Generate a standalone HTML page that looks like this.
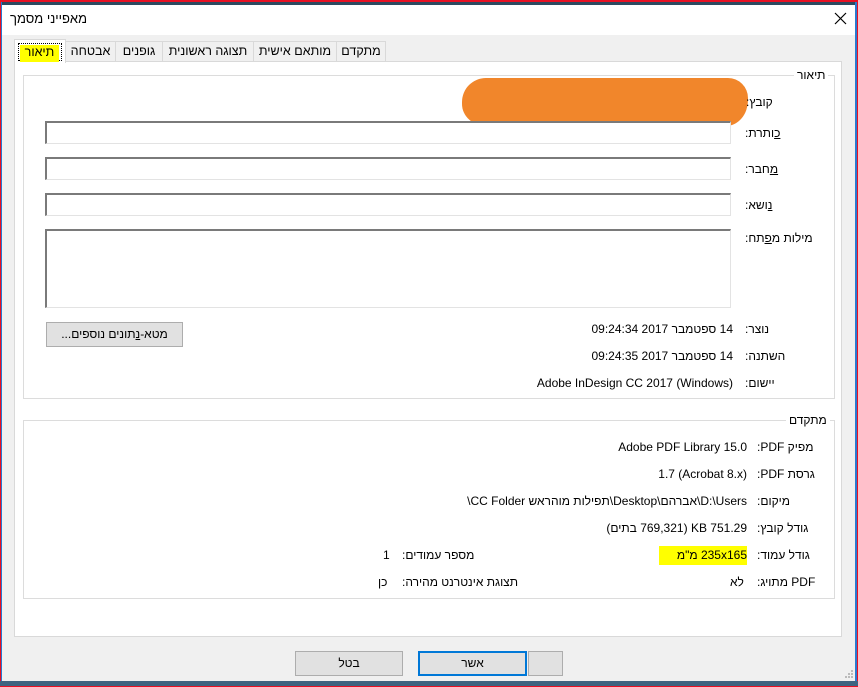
<!DOCTYPE html>
<html><head><meta charset="utf-8">
<style>
*{margin:0;padding:0;box-sizing:border-box}
body{width:858px;height:687px;position:relative;overflow:hidden;background:#f0f0f0;font-family:"Liberation Sans","DejaVu Sans",sans-serif;font-size:12px;color:#000}
.a{position:absolute}
.r{direction:rtl;white-space:nowrap}
.field{position:absolute;left:45px;width:686px;background:#fff;border:1px solid #e3e3e3;border-top:2px solid #7a7a7a;border-left:2px solid #7a7a7a}
.tab{position:absolute;top:41px;height:21px;background:#f0f0f0;border:1px solid #d9d9d9;border-bottom:none;text-align:center;line-height:19px;font-size:12.5px;direction:rtl}
.lbl{position:absolute;direction:rtl;white-space:nowrap}
.btn{position:absolute;background:#e1e1e1;border:1px solid #adadad;text-align:center;direction:rtl}
u{text-decoration:underline}
</style></head><body>
<!-- frame -->
<div class="a" style="left:0;top:0;width:858px;height:2px;background:#e81123"></div>
<div class="a" style="left:0;top:2px;width:858px;height:3px;background:#2d4a60"></div>
<div class="a" style="left:0;top:0;width:1px;height:687px;background:#e81123"></div>
<div class="a" style="left:1px;top:2px;width:1px;height:685px;background:#2b79d0"></div>
<div class="a" style="left:857px;top:0;width:1px;height:687px;background:#e81123"></div>
<div class="a" style="left:855px;top:2px;width:2px;height:685px;background:#2b79d0"></div>
<div class="a" style="left:0;top:681px;width:858px;height:5px;background:#3d6480"></div>
<div class="a" style="left:0;top:686px;width:858px;height:1px;background:#e81123"></div>
<!-- title -->
<div class="a" style="left:2px;top:5px;width:853px;height:30px;background:#fff"></div>
<div class="a r" style="left:10px;top:11px;font-size:13px">מאפייני מסמך</div>
<svg class="a" style="left:834px;top:12px" width="13" height="13"><path d="M1 1L12 12M12 1L1 12" stroke="#000" stroke-width="1.2"/></svg>
<!-- tabs -->
<div class="tab" style="left:65px;width:51px">אבטחה</div>
<div class="tab" style="left:115px;width:48px">גופנים</div>
<div class="tab" style="left:162px;width:92px">תצוגה ראשונית</div>
<div class="tab" style="left:253px;width:84px">מותאם אישית</div>
<div class="tab" style="left:336px;width:50px">מתקדם</div>
<!-- panel -->
<div class="a" style="left:14px;top:61px;width:828px;height:576px;background:#fff;border:1px solid #d9d9d9"></div>
<div class="tab" style="left:14px;top:39px;width:52px;height:24px;background:#fff;border-color:#d9d9d9;z-index:2">
 <div style="position:absolute;left:3px;top:3px;width:44px;height:18px;border:1px dotted #000"></div>
 <span style="position:absolute;left:5px;top:5px;width:39px;height:17px;background:#ffff00;line-height:15px">תיאור</span>
</div>
<!-- group 1 -->
<div class="a" style="left:23px;top:75px;width:812px;height:324px;border:1px solid #dcdcdc"></div>
<div class="a r" style="left:794px;top:68px;background:#fff;padding:0 3px">תיאור</div>
<div class="a" style="left:462px;top:78px;width:286px;height:48px;background:#f08020;border-radius:24px 20px 22px 24px/24px 20px 26px 22px;opacity:.95"></div>
<div class="a" style="left:500px;top:80px;width:240px;height:6px;background:#f0f0f0;border-radius:0 0 40px 40px;opacity:0"></div>
<div class="lbl" style="left:746px;top:95px">קובץ:</div>
<div class="lbl" style="left:745px;top:126px"><u>כ</u>ותרת:</div>
<div class="field" style="top:121px;height:23px"></div>
<div class="lbl" style="left:745px;top:162px"><u>מ</u>חבר:</div>
<div class="field" style="top:157px;height:23px"></div>
<div class="lbl" style="left:745px;top:198px"><u>נ</u>ושא:</div>
<div class="field" style="top:193px;height:23px"></div>
<div class="lbl" style="left:745px;top:231px">מילות מ<u>פ</u>תח:</div>
<div class="field" style="top:229px;height:79px"></div>
<div class="btn" style="left:46px;top:322px;width:137px;height:25px;line-height:23px">מטא-<u>נ</u>תונים נוספים...</div>
<div class="lbl" style="left:745px;top:322px">נוצר:</div>
<div class="lbl" style="right:125px;top:322px">14 ספטמבר 2017 09:24:34</div>
<div class="lbl" style="left:745px;top:349px">השתנה:</div>
<div class="lbl" style="right:125px;top:349px">14 ספטמבר 2017 09:24:35</div>
<div class="lbl" style="left:745px;top:376px">יישום:</div>
<div class="a" style="right:125px;top:376px;white-space:nowrap">Adobe InDesign CC 2017 (Windows)</div>
<!-- group 2 -->
<div class="a" style="left:23px;top:420px;width:812px;height:179px;border:1px solid #dcdcdc"></div>
<div class="a r" style="left:786px;top:413px;background:#fff;padding:0 3px">מתקדם</div>
<div class="lbl" style="left:757px;top:440px">מפיק PDF:</div>
<div class="a" style="right:111px;top:440px;white-space:nowrap">Adobe PDF Library 15.0</div>
<div class="lbl" style="left:757px;top:467px">גרסת PDF:</div>
<div class="a" style="right:111px;top:467px;white-space:nowrap">1.7 (Acrobat 8.x)</div>
<div class="lbl" style="left:757px;top:494px">מיקום:</div>
<div class="lbl" style="right:111px;top:494px">D:\Users\אברהם\Desktop\תפילות מוהראש CC Folder\</div>
<div class="lbl" style="left:757px;top:521px">גודל קובץ:</div>
<div class="lbl" style="right:111px;top:521px">751.29 KB (769,321 בתים)</div>
<div class="lbl" style="left:757px;top:548px">גודל עמוד:</div>
<div class="a" style="left:659px;top:546px;width:88px;height:19px;background:#ffff00"></div>
<div class="lbl" style="right:111px;top:548px">235x165 מ"מ</div>
<div class="lbl" style="left:402px;top:548px">מספר עמודים:</div>
<div class="a" style="left:383px;top:548px">1</div>
<div class="lbl" style="left:757px;top:575px">PDF מתויג:</div>
<div class="lbl" style="left:730px;top:575px">לא</div>
<div class="lbl" style="left:402px;top:575px">תצוגת אינטרנט מהירה:</div>
<div class="lbl" style="left:378px;top:575px">כן</div>
<!-- buttons -->
<div class="btn" style="left:295px;top:651px;width:108px;height:25px;line-height:23px">בטל</div>
<div class="btn" style="left:418px;top:651px;width:109px;height:25px;line-height:21px;border:2px solid #0078d7">אשר</div>
<div class="btn" style="left:528px;top:651px;width:35px;height:25px"></div>
<svg class="a" style="left:844px;top:669px" width="10" height="10"><g fill="#bbb"><rect x="7" y="1" width="2" height="2"/><rect x="4" y="4" width="2" height="2"/><rect x="7" y="4" width="2" height="2"/><rect x="1" y="7" width="2" height="2"/><rect x="4" y="7" width="2" height="2"/><rect x="7" y="7" width="2" height="2"/></g></svg>
</body></html>
